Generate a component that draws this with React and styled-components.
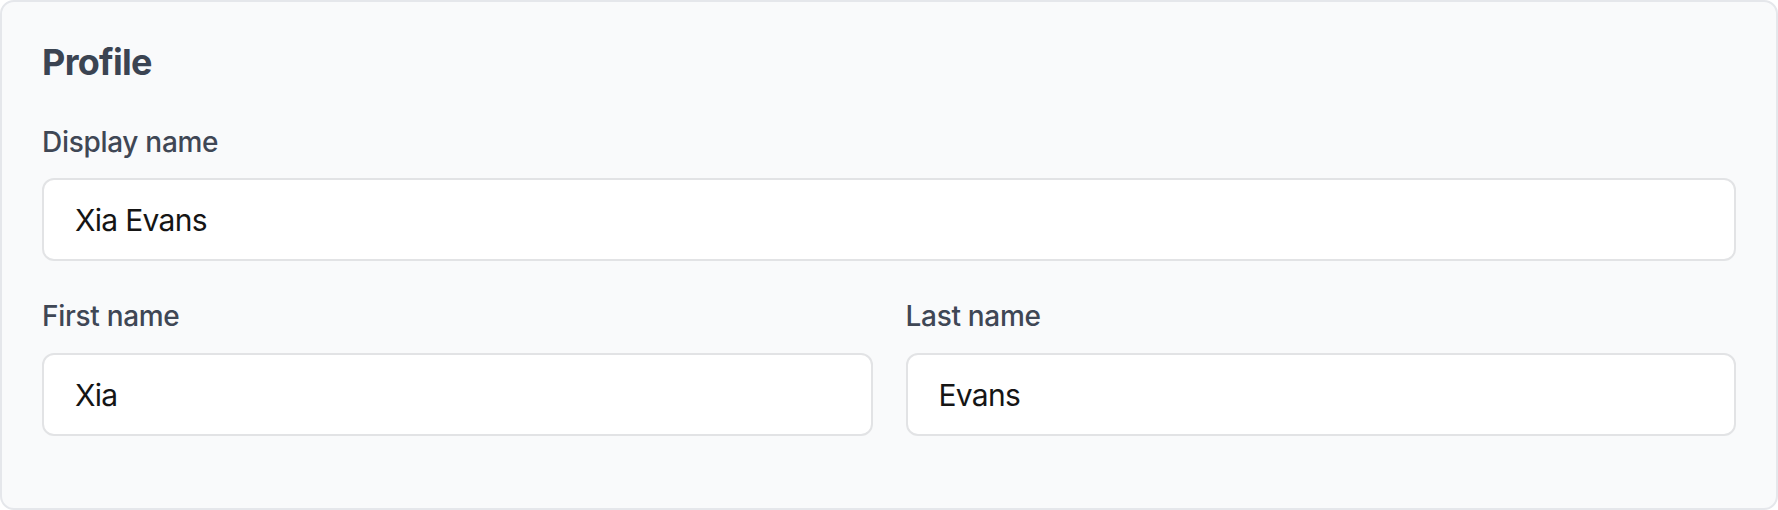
import React from 'react';
import styled, { createGlobalStyle } from 'styled-components';

const GlobalStyle = createGlobalStyle`
	html, body {
		margin: 0;
		padding: 0;
		background: #ffffff;
	}
	body {
		font-family: Inter, "Noto Sans", "Liberation Sans", sans-serif;
	}
`;

const Card = styled.section`
	box-sizing: border-box;
	width: 1778px;
	height: 510px;
	padding: 39px 40px 70px;
	background: #f9fafb;
	border: 2px solid #e5e7eb;
	border-radius: 14px;
	display: flex;
	flex-direction: column;
	gap: 39px;
`;

const Title = styled.h2`
	margin: 0 0 2px;
	font-size: 36px;
	line-height: 1.21;
	font-weight: 700;
	color: #3b4452;
	letter-spacing: -0.7px;
`;

const Row = styled.div`
	display: grid;
	grid-template-columns: 1fr 1fr;
	gap: 33px;
`;

const Field = styled.label`
	display: flex;
	flex-direction: column;
	gap: 19px;
	min-width: 0;
`;

const Label = styled.span`
	font-size: 28px;
	line-height: 1.21;
	font-weight: 500;
	color: #3f4755;
	letter-spacing: -0.3px;
`;

const Input = styled.input`
	box-sizing: border-box;
	width: 100%;
	height: 83px;
	padding: 0 31px;
	border: 2px solid #e2e3e5;
	border-radius: 12px;
	background: #ffffff;
	font-family: Inter, "Noto Sans", "Liberation Sans", sans-serif;
	font-size: 30px;
	letter-spacing: -0.7px;
	color: #151515;
	outline: none;
`;

function TextField({ label, value }) {
	return (
		<Field>
			<Label>{label}</Label>
			<Input defaultValue={value} readOnly />
		</Field>
	);
}

export default function App() {
	return (
		<>
			<GlobalStyle />
			<Card>
				<Title>Profile</Title>
				<TextField label="Display name" value="Xia Evans" />
				<Row>
					<TextField label="First name" value="Xia" />
					<TextField label="Last name" value="Evans" />
				</Row>
			</Card>
		</>
	);
}
